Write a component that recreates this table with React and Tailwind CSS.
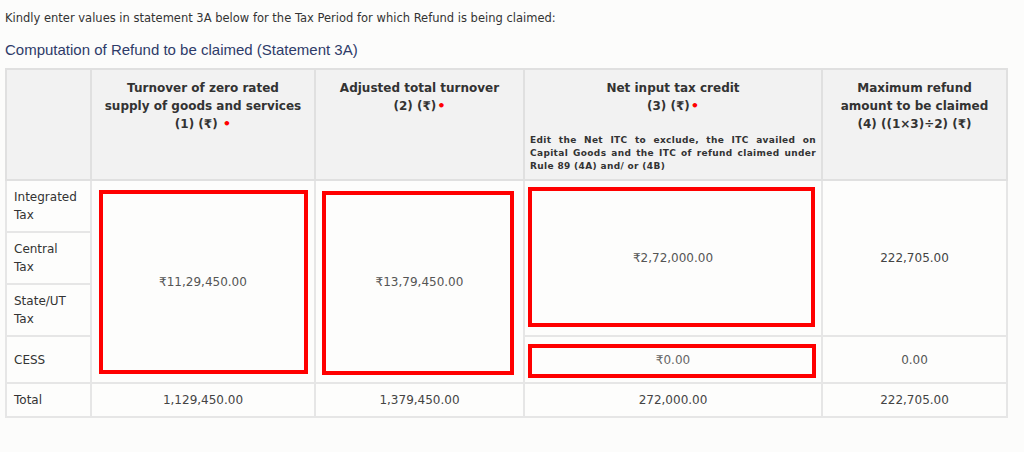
import React from "react";

const font = { fontFamily: '"DejaVu Sans", Verdana, sans-serif' };

const RedBox = ({ className }) => (
  <div className={`absolute border-4 border-[#ff0000] pointer-events-none ${className}`} />
);

const Req = () => <span className="text-[#ff0000] text-[13px] align-top ml-[1px]">•</span>;

export default function App() {
  return (
    <div className="w-[1024px] h-[452px] bg-[#fcfcfb] text-[#333] overflow-hidden">
      <p
        className="pt-[10px] pl-[5px] text-[11.5px] leading-[16px] text-[#333]"
        style={font}
      >
        Kindly enter values in statement 3A below for the Tax Period for which Refund is being claimed:
      </p>
      <h3 className="pl-[5px] mt-[15px] text-[15px] leading-[18px] text-[#2e3b69] font-['Liberation_Sans',Arial,sans-serif]">
        Computation of Refund to be claimed (Statement 3A)
      </h3>
      <table
        className="ml-[5px] mt-[9px] w-[1001px] table-fixed border-collapse text-[12px]"
        style={font}
      >
        <colgroup>
          <col className="w-[85px]" />
          <col className="w-[224px]" />
          <col className="w-[209px]" />
          <col className="w-[298px]" />
          <col className="w-[185px]" />
        </colgroup>
        <thead>
          <tr className="h-[111px] bg-[#f2f2f2] align-top">
            <th className="border-2 border-[#e0e0e0]" />
            <th className="border-2 border-[#e0e0e0] pt-[9px] px-1 font-bold leading-[18px] text-[#333]">
              Turnover of zero rated
              <br />
              supply of goods and services
              <br />
              (1) (₹) <Req />
            </th>
            <th className="border-2 border-[#e0e0e0] pt-[9px] px-2 font-bold leading-[18px] text-[#333]">
              Adjusted total turnover
              <br />
              (2) (₹)<Req />
            </th>
            <th className="border-2 border-[#e0e0e0] pt-[9px] px-[5px] font-bold leading-[18px] text-[#333]">
              Net input tax credit
              <br />
              (3) (₹)<Req />
              <div className="mt-[19px] text-[9px] tracking-[0.35px] leading-[13px] font-bold">
                <div className="text-justify [text-align-last:justify]">
                  Edit the Net ITC to exclude, the ITC availed on
                </div>
                <div className="text-justify [text-align-last:justify]">
                  Capital Goods and the ITC of refund claimed under
                </div>
                <div className="text-left">Rule 89 (4A) and/ or (4B)</div>
              </div>
            </th>
            <th className="border-2 border-[#e0e0e0] pt-[9px] px-2 font-bold leading-[18px] text-[#333]">
              Maximum refund amount to be claimed (4) ((1×3)÷2) (₹)
            </th>
          </tr>
        </thead>
        <tbody className="bg-[#fdfdfc]">
          <tr className="h-[52px]">
            <td className="border-2 border-[#e6e6e6] pl-[7px] leading-[18px]">
              Integrated
              <br />
              Tax
            </td>
            <td rowSpan={4} className="relative border-2 border-[#e6e6e6] text-center text-[#555]">
              <RedBox className="left-[7px] right-[6px] top-[9px] bottom-[8px]" />
              ₹11,29,450.00
            </td>
            <td rowSpan={4} className="relative border-2 border-[#e6e6e6] text-center text-[#555]">
              <RedBox className="left-[6px] right-[9px] top-[10px] bottom-[7px]" />
              ₹13,79,450.00
            </td>
            <td rowSpan={3} className="relative border-2 border-[#e6e6e6] text-center text-[#555]">
              <RedBox className="left-[3px] right-[6px] top-[6px] bottom-[8px]" />
              ₹2,72,000.00
            </td>
            <td rowSpan={3} className="border-2 border-[#e6e6e6] text-center text-[#444]">
              222,705.00
            </td>
          </tr>
          <tr className="h-[52px]">
            <td className="border-2 border-[#e6e6e6] pl-[7px] leading-[18px]">
              Central
              <br />
              Tax
            </td>
          </tr>
          <tr className="h-[52px]">
            <td className="border-2 border-[#e6e6e6] pl-[7px] leading-[18px]">
              State/UT
              <br />
              Tax
            </td>
          </tr>
          <tr className="h-[47px]">
            <td className="border-2 border-[#e6e6e6] pl-[7px]">CESS</td>
            <td className="relative border-2 border-[#e6e6e6] text-center text-[#666]">
              <RedBox className="left-[3px] right-[5px] top-[7px] bottom-[4px]" />
              ₹0.00
            </td>
            <td className="border-2 border-[#e6e6e6] text-center text-[#555]">0.00</td>
          </tr>
          <tr className="h-[34px]">
            <td className="border-2 border-[#e6e6e6] pl-[7px]">Total</td>
            <td className="border-2 border-[#e6e6e6] text-center text-[#444]">1,129,450.00</td>
            <td className="border-2 border-[#e6e6e6] text-center text-[#444]">1,379,450.00</td>
            <td className="border-2 border-[#e6e6e6] text-center text-[#444]">272,000.00</td>
            <td className="border-2 border-[#e6e6e6] text-center text-[#444]">222,705.00</td>
          </tr>
        </tbody>
      </table>
    </div>
  );
}
